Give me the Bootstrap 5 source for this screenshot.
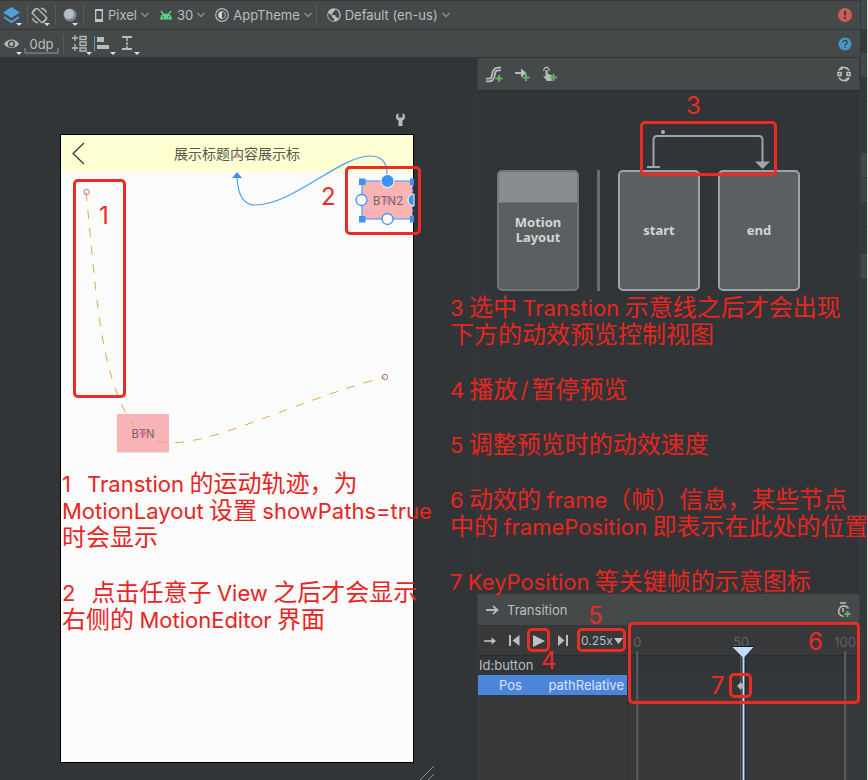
<!DOCTYPE html>
<html lang="zh-CN">
<head>
<meta charset="utf-8">
<meta name="viewport" content="width=device-width, initial-scale=1">
<title>Motion Editor</title>
<link href="https://cdn.jsdelivr.net/npm/bootstrap@5.3.0/dist/css/bootstrap.min.css" rel="stylesheet">
<style>
body{background:#313537;color:#bbbdbf;font:13px/16px Inter,"Noto Sans CJK SC",sans-serif}
svg{display:block;overflow:visible}
button,select{background:none;border:0;padding:0;color:inherit;font:inherit}
.bar{background:#45494a;border-bottom:1px solid #333637}
.bar-top{height:30px;border-top:1px solid #38393a}
.bar-second{height:28px}
.cell{width:27px;height:20px;position:relative;padding-left:3px}
.cell::after,.nub::after{content:"";position:absolute;right:5px;bottom:-1px;border:3px solid transparent;border-top-color:#ddd;border-bottom:0}
.drop{gap:4px;margin-left:10px}
.rule-v{width:1px;height:20px;background:#5d5856}
.nub{position:relative;width:24px;height:20px}
.nub::after{right:4px}
.nub-eye::after{right:2px}
.dp{width:35px;height:20px;line-height:14px;position:relative}
.edge{width:8px;border-right:1px solid #cfe0d8;border-left:1px solid #35383a;background:linear-gradient(#45494a 29px,#36383a 29px 53px,#45494a 53px 77px,#36393b 77px 101px,#303335 101px 102px,#36393b 102px 153px,#46494b 153px 177px,#36393b 177px 178px,#414446 178px 202px,#36393b 202px 226px,#303335 226px 227px,#36393b 227px 254px,#46494b 254px 278px,#36393b 278px)}
.design{background:#313537}
.phone-wrap{padding:76px 0 16px 60px}
.phone{width:354px;height:629px;background:#fbfbfb;border:1px solid #000}
.phone-head{height:37px;background:#feffd3;color:#58594b;font-size:14px;line-height:37px}
.overlay{left:0;top:0;pointer-events:none}
.wrench{left:394px;top:54px}
.editor{width:383px;border-left:1px solid #383b3c;border-right:1px solid #3a3d3f}
.bar-tools{height:33px;border-bottom:1px solid #2b2e2f}
.graph{height:503px;background:#313537}
.set-row{padding:79px 0 0 19px;gap:18px}
.set-box{width:82px;height:121px;border:2px solid #a0a3a4;border-radius:5px;background:#5a6061;color:#d3d5d5;font:bold 13px/15px "Noto Sans","Open Sans",sans-serif}
.set-root{border-color:#737475}
.set-root-top{height:31px;background:#8a8d8f;border-bottom:1px solid #737475;border-radius:3px 3px 0 0}
.set-line{width:3px;background:#6b6c6d}
.bar-trans{height:32px}
.controls{height:30px;gap:12px;padding-left:6px;border-bottom:1px solid #292b2c}
.tl-left{width:150px;border-right:1px solid #2c2e2f;background:#38393a}
.tl-right{background:#38393a}
.row-id{height:19px;background:#313537;line-height:19px;padding-left:1px}
.row-pos{height:21px;background:#4b85dc;color:#dbe5f5;line-height:20px;border-bottom:1px solid #303a48;padding:0 3px 0 21px}
.tl-head{height:30px;border-bottom:1px solid #2b2d2e}
.tl-row{height:19px;background:#313537}
.tl-row2{height:21px;background:#343739}
.speed{width:42px;appearance:none;font-size:12px}
.mark-box{position:absolute;border:3px solid #ec2b24;border-radius:5px}
.mark-num{position:absolute;color:#ec2b24;font:24px/28px Inter,sans-serif}
.note{position:absolute;color:#e8251f;font:24px/27px "Noto Sans CJK SC",sans-serif;white-space:nowrap}
.note p{margin:0 0 28px}
.note i{font:22px/0 Inter,sans-serif}
.note .slash{padding:0 3px}
.note-a{left:62px;top:468px}
.note-b{left:-28px;top:234px}
.m1{left:73px;top:121px;width:53px;height:219px}.n1{left:99px;top:144px}
.m2{left:345px;top:108px;width:76px;height:69px}.n2{left:321px;top:125px}
.m3{left:162px;top:30px;width:137px;height:55px}.n3{left:208px;top:1px}
.m4{left:49px;top:34px;width:23px;height:24px}.n4{left:63px;top:53px}
.m5{left:99px;top:34px;width:49px;height:24px}.n5{left:110px;top:8px}
.m6{left:150px;top:28px;width:232px;height:82px}.n6{left:330px;top:34px}
.m7{left:251px;top:79px;width:23px;height:25px}.n7{left:233px;top:78px}
</style>
<script src="https://cdn.jsdelivr.net/npm/bootstrap@5.3.0/dist/js/bootstrap.bundle.min.js"></script>
</head>
<body>
<div class="d-flex min-vh-100 overflow-hidden">
<div class="d-flex flex-column flex-grow-1 position-relative">

<header class="bar bar-top d-flex align-items-center">
  <button class="cell" aria-label="Layers"><svg width="17" height="17" viewBox="0 0 17 17"><path d="M8.500 0 17 5.500 8.500 11 0 5.500z" fill="#4d9fd6"/><path d="M1 10 8.500 15 16 10" fill="none" stroke="#4d9fd6" stroke-width="2"/></svg></button>
  <span class="rule-v"></span>
  <button class="cell" aria-label="Orientation"><svg width="17" height="17" viewBox="0 0 17 17" fill="none" stroke="#b4b6b7" stroke-width="1.400"><rect x="5" y="1.500" width="7" height="14" rx="1" transform="rotate(-45 8.500 8.500)"/><path d="M1.200 7A7 7 0 0 1 5 1.500M15.800 10A7 7 0 0 1 12 15.500M10 1.200a7 7 0 0 1 5.500 4.500M7 15.800a7 7 0 0 1-5.500-4.500"/></svg></button>
  <span class="rule-v"></span>
  <button class="cell" aria-label="Night mode"><svg class="ms-1" width="16" height="17" viewBox="0 0 16 17"><circle cx="7" cy="8" r="6.500" fill="#7d8a94"/><circle cx="6" cy="7" r="5" fill="#b3bec8"/></svg></button>
  <span class="rule-v"></span>
  <button class="drop d-flex align-items-center"><svg width="10" height="13" viewBox="0 0 10 13"><path fill="#c2c4c5" fill-rule="evenodd" d="M1 0h8v13H1zM2.300 2v8h5.400V2z"/></svg><span>Pixel</span><svg width="8" height="6" viewBox="0 0 8 6"><path d="M.5 1 4 4.500 7.500 1" fill="none" stroke="#8b8e90" stroke-width="1.500"/></svg></button>
  <button class="drop d-flex align-items-center"><svg width="14" height="10" viewBox="0 0 14 10"><path d="M1 9.500a6 6 0 0 1 12 0z" fill="#5bd183"/><path d="M2 1 5 5M12 1 9 5" stroke="#5bd183" stroke-width="1.500"/><circle cx="4.300" cy="7" r=".8" fill="#45494a"/><circle cx="9.700" cy="7" r=".8" fill="#45494a"/></svg><span>30</span><svg width="8" height="6" viewBox="0 0 8 6"><path d="M.5 1 4 4.500 7.500 1" fill="none" stroke="#8b8e90" stroke-width="1.500"/></svg></button>
  <button class="drop d-flex align-items-center"><svg width="14" height="14" viewBox="0 0 14 14"><circle cx="7" cy="7" r="6.300" fill="none" stroke="#b6b8b9" stroke-width="1.200"/><circle cx="7" cy="7" r="3.500" fill="none" stroke="#b6b8b9"/><path d="M7 3.500a3.500 3.500 0 0 0 0 7z" fill="#d0d2d3"/></svg><span>AppTheme</span><svg width="8" height="6" viewBox="0 0 8 6"><path d="M.5 1 4 4.500 7.500 1" fill="none" stroke="#8b8e90" stroke-width="1.500"/></svg></button>
  <span class="rule-v ms-1"></span>
  <button class="drop d-flex align-items-center"><svg width="14" height="14" viewBox="0 0 14 14"><circle cx="7" cy="7" r="6.800" fill="#b9bbbc"/><path d="M1.500 5l3.500 3v1.500l2 1V13C3 13 0 9 1.500 5zM8 1.200v1.500L6 4v1.500L4.500 6v1H8l1 2.300h1.300l1 1.500C13.500 8 12.500 3 8 1.200z" fill="#45494a"/></svg><span>Default (en-us)</span><svg width="8" height="6" viewBox="0 0 8 6"><path d="M.5 1 4 4.500 7.500 1" fill="none" stroke="#8b8e90" stroke-width="1.500"/></svg></button>
  <button class="ms-auto me-2" aria-label="Errors"><svg width="14" height="14" viewBox="0 0 14 14"><circle cx="7" cy="7" r="7" fill="#cb5b5b"/><path d="M7 3v4.500M7 9v2" stroke="#343638" stroke-width="1.800"/></svg></button>
</header>

<div class="bar bar-second d-flex align-items-center">
  <button class="nub nub-eye" aria-label="View options"><svg class="ms-1" width="15" height="19" viewBox="0 0 15 19"><path d="M0 10C3 4 12 4 15 10 12 15.500 3 15.500 0 10z" fill="#b4b6b7"/><circle cx="7.500" cy="10" r="3.500" fill="#45494a"/><circle cx="7.500" cy="10" r="2" fill="#b4b6b7"/></svg></button>
  <button class="dp">0dp<svg class="position-absolute bottom-0 start-0" width="35" height="6" viewBox="0 0 35 6"><path d="M1 0v5h33V0" fill="none" stroke="#96999a"/></svg></button>
  <span class="rule-v ms-1"></span>
  <button class="nub ms-2" aria-label="Pack"><svg width="17" height="19" viewBox="0 0 17 19" fill="none" stroke="#b9bbbc" stroke-width="1.300"><path d="M0 4h6M3 1v6M0 14h6M3 10v7M8 2.500h6v3H8zM8 8h6v3.500H8zM8 14h6v3H8z"/></svg></button>
  <button class="nub" aria-label="Align"><svg width="17" height="19" viewBox="2 0 17 19"><path d="M.5 2v15" stroke="#4d9fd6"/><path d="M3 3h7v5H3zM3 11h12v4H3z" fill="#b9bbbc"/></svg></button>
  <button class="nub" aria-label="Guidelines"><svg width="17" height="19" viewBox="1 0 17 19" fill="none" stroke="#b9bbbc"><path d="M3 3h10M3 15h10" stroke-width="2"/><path d="M8 4v11" stroke-width="1.500" stroke-dasharray="3 1"/></svg></button>
  <button class="ms-auto me-2" aria-label="Help"><svg width="14" height="14" viewBox="0 0 14 14"><circle cx="7" cy="7" r="6.500" fill="#4897c6"/><path d="M4.800 5.500c0-3 4.500-2.500 4.400 0C9.200 7 7 7 7 8.700M7 9.700V11" fill="none" stroke="#2b4454" stroke-width="1.300"/></svg></button>
</div>

<div class="d-flex flex-grow-1">
<main class="design position-relative flex-grow-1">
  <div class="phone-wrap">
    <section class="phone">
      <div class="phone-head text-center">展示标题内容展示标</div>
    </section>
  </div>
  <svg class="overlay position-absolute" width="478" height="722" viewBox="0 58 478 722">
    <path d="M84 143 73 153.500 84 164" fill="none" stroke="#333" stroke-width="1.200"/>
    <rect x="117" y="415" width="52" height="38" fill="#bbb" opacity=".4"/><rect x="117" y="414" width="52" height="38" fill="#f7b3b5"/>
    <text x="143" y="438" text-anchor="middle" font-family="Roboto" font-size="12" fill="#80656a">BTN</text>
    <path d="M86 192C96 285 98 370 132 424C165 475 262 410 385 377" fill="none" stroke="#e6a94f" stroke-dasharray="9 9"/>
    <circle cx="86.500" cy="192" r="2.700" fill="none" stroke="#c5788f"/><circle cx="385" cy="377" r="2.700" fill="none" stroke="#b5738f"/>
    <path d="M143 429l3.500 4-3.500 4-3.500-4z" fill="#d873a2"/>
    <path d="M235 157l2-4 2 4M235 157h4" fill="none" stroke="#c5788f"/>
    <rect x="362" y="181" width="51" height="38" fill="#f7b3b5" stroke="#3b93f7"/>
    <text x="388" y="205" text-anchor="middle" font-family="Roboto" font-size="12" fill="#7a6468">BTN2</text>
    <path d="M386 198h4v4h-4z" fill="none" stroke="#d873a2"/>
    <path d="M413.500 182v38" stroke="#26394a" stroke-dasharray="3 2" stroke-width="2"/>
    <path d="M237 178C238 194 243 205 255 205C293 205 340 156 370 156C382 156 387 163 387 174" fill="none" stroke="#4b9df5" stroke-width="1.200"/>
    <path d="M232 178l5-6 5 6z" fill="#3b93f7"/>
    <path d="M359 178.500h6.500v6.500H359zM359 216h6.500v6.500H359zM410 178.500h4v6.500h-4zM410 216h4v6.500h-4z" fill="#3b93f7"/>
    <path d="M414 194a6 6 0 0 0 0 12z" fill="#3b93f7" stroke="#fff" stroke-width="1"/>
    <circle cx="387.500" cy="181" r="6.500" fill="#3b93f7" stroke="#fff"/>
    <g fill="#fff" stroke="#3b93f7" stroke-width="1.300"><circle cx="361.500" cy="200" r="5.500"/><circle cx="387.500" cy="219" r="5.500"/></g>
    <path d="M420 780l14-14M428 780l6-6" stroke="#8c8e8f"/>
  </svg>
  <svg class="wrench position-absolute" width="13" height="15" viewBox="0 0 13 15"><path d="M4.500 1C1 2.500 1 7 4.500 8.500V14h4V8.500C12 7 12 2.500 8.500 1v4.500h-4z" fill="#b6b8b9"/></svg>
  <div class="mark-box m1"></div><div class="mark-num n1">1</div>
  <div class="mark-box m2"></div><div class="mark-num n2">2</div>
</main>

<aside class="editor position-relative d-flex flex-column">
  <div class="bar bar-tools d-flex align-items-center px-2">
    <button aria-label="Create set"><svg width="17" height="17" viewBox="0 0 17 17" fill="none"><path d="M0 14h3c7 0 2-11 9-11h3" stroke="#b9bbbc" stroke-width="4.500"/><path d="M0 14h3c7 0 2-11 9-11h3" stroke="#45494a"/><path d="M13 9v7M9.500 12.500h7" stroke="#5fb565" stroke-width="2"/></svg></button>
    <button class="ms-2" aria-label="Create transition"><svg class="ms-1" width="16" height="17" viewBox="0 0 16 17" fill="none"><path d="M0 7h9" stroke="#b9bbbc" stroke-width="2"/><path d="M6 2.500 11.500 7 6 11.500z" fill="#b9bbbc"/><path d="M11 8v7M7.500 11.500h7" stroke="#5fb565" stroke-width="2"/></svg></button>
    <button class="ms-2" aria-label="Create click handler"><svg class="ms-1" width="17" height="17" viewBox="0 0 17 17"><path d="M1 5a2.700 2.700 0 1 1 5 0" fill="none" stroke="#b9bbbc" stroke-width="1.200"/><path d="M2.500 4h2.200v4l4 1v6H4L0 10l2.500.5z" fill="#b9bbbc"/><path d="M10.500 8v7M7 11.500h7" stroke="#5fb565" stroke-width="2"/></svg></button>
    <button class="ms-auto" aria-label="Cycle layouts"><svg width="14" height="16" viewBox="0 0 14 16" fill="none" stroke="#c0c2c3" stroke-width="1.500"><path d="M2 4.500C3 1 10 0 12 4.500M12 11.500C11 15 4 16 2 11.500M4.500.5v3.500M9.500 15.500V12"/><path d="M1 6.500h3v3H1zM10 6.500h3v3h-3z"/></svg></button>
  </div>
  <section class="graph position-relative">
    <div class="set-row d-flex">
      <div class="set-box set-root text-center"><div class="set-root-top"></div><div class="pt-2 mt-1">Motion<br>Layout</div></div>
      <div class="set-line"></div>
      <div class="set-box d-flex align-items-center justify-content-center">start</div>
      <div class="set-box d-flex align-items-center justify-content-center">end</div>
    </div>
    <svg class="overlay position-absolute" width="380" height="200" viewBox="478 91 380 200"><circle cx="663" cy="132" r="2" fill="#b0b2b3"/><path d="M653.500 167v-27q0-4 4-4h101q4 0 4 4v23" fill="none" stroke="#a2a4a5" stroke-width="2"/><path d="M647 167h13" stroke="#a2a4a5" stroke-width="2"/><path d="M755 161.500h15l-7.500 7.500z" fill="#a2a4a5"/></svg>
    <div class="mark-box m3"></div><div class="mark-num n3">3</div>
  </section>

  <section class="position-relative flex-grow-1 d-flex flex-column">
    <div class="bar bar-trans d-flex align-items-center px-2">
      <svg width="13" height="10" viewBox="0 0 13 10"><path d="M0 5h10M7 1l4.500 4L7 9" fill="none" stroke="#aebac4" stroke-width="1.800"/></svg><span class="ms-2">Transition</span>
      <button class="ms-auto" aria-label="Add key frame"><svg width="15" height="16" viewBox="0 0 15 16" fill="none"><path d="M4 1h6M12.500 6.500A5.300 5.300 0 1 0 7.500 14.500M7 6v4" stroke="#b9bbbc" stroke-width="1.600"/><path d="M11.500 9v6M8.500 12h6" stroke="#5fb565" stroke-width="2"/></svg></button>
    </div>
    <div class="d-flex flex-grow-1">
      <div class="tl-left">
        <div class="controls d-flex align-items-center">
          <button aria-label="Play mode"><svg width="13" height="10" viewBox="0 0 13 10"><path d="M0 5h9" stroke="#c0c2c3" stroke-width="1.600"/><path d="M7.500 1.500 12 5 7.500 8.500z" fill="#c0c2c3"/></svg></button>
          <button aria-label="Go to start"><svg width="12" height="11" viewBox="0 0 12 11"><path d="M0 0h2v11H0zM10.500 0v11L3.500 5.500z" fill="#bbbdbf"/></svg></button>
          <button aria-label="Play"><svg width="12" height="12" viewBox="0 0 12 12"><path d="M0 0v12L12 6z" fill="#c0c2c3"/></svg></button>
          <button aria-label="Go to end"><svg width="12" height="11" viewBox="0 0 12 11"><path d="M1 0v11l6.500-5.500zM9 0h2v11H9z" fill="#bbbdbf"/></svg></button>
          <div class="position-relative"><select class="speed" aria-label="Speed"><option>0.25x</option></select><svg class="position-absolute end-0 top-50 translate-middle-y" width="9" height="6" viewBox="0 0 9 6"><path d="M0 0h9L4.500 6z" fill="#c0c2c3"/></svg></div>
        </div>
        <div class="row-id">Id:button</div>
        <div class="row-pos d-flex justify-content-between"><span>Pos</span><span>pathRelative</span></div>
      </div>
      <div class="tl-right flex-grow-1 position-relative">
        <div class="tl-head"></div><div class="tl-row"></div><div class="tl-row2"></div>
        <svg class="overlay position-absolute" width="100%" height="100%">
          <g font-size="13" fill="#606263" text-anchor="middle"><text x="4%" y="21">0</text><text x="49%" y="21">50</text><text x="94%" y="21">100</text></g>
          <g stroke="#5b5d5e" stroke-width="2"><line x1="4%" x2="4%" y1="25" y2="100%"/><line x1="49%" x2="49%" y1="25" y2="100%"/><line x1="94%" x2="94%" y1="25" y2="100%"/></g>
          <line x1="50%" x2="50%" y1="30" y2="100%" stroke="#17191a" stroke-width="4"/><line x1="50%" x2="50%" y1="30" y2="100%" stroke="#c3dcff" stroke-width="2"/>
          <svg x="50%" y="0"><path d="M-11 21h21L0 32z" fill="#c3dcff"/><path d="M-11 20.500h21" stroke="#17191a"/><path d="M-6.500 60l4-4v8zM-3 56l3.500 4-3.500 4z" fill="#b4b6b7"/></svg>
        </svg>
      </div>
    </div>
    <div class="mark-box m4"></div><div class="mark-num n4">4</div>
    <div class="mark-box m5"></div><div class="mark-num n5">5</div>
    <div class="mark-box m6"></div><div class="mark-num n6">6</div>
    <div class="mark-box m7"></div><div class="mark-num n7">7</div>
  </section>
  <div class="note note-b">
    <p><i>3</i> 选中 <i>Transtion</i> 示意线之后才会出现<br>下方的动效预览控制视图</p>
    <p><i>4</i> 播放<i class="slash">/</i>暂停预览</p>
    <p><i>5</i> 调整预览时的动效速度</p>
    <p><i>6</i> 动效的 <i>frame</i>（帧）信息，某些节点<br>中的 <i>framePosition</i> 即表示在此处的位置</p>
    <p class="mb-0"><i>7</i> <i>KeyPosition</i> 等关键帧的示意图标</p>
  </div>
</aside>
</div>
<div class="note note-a">
  <p><i>1</i> &nbsp; <i>Transtion</i> 的运动轨迹，为<br><i>MotionLayout</i> 设置 <i>showPaths=true</i><br>时会显示</p>
  <p class="mb-0"><i>2</i> &nbsp; 点击任意子 <i>View</i> 之后才会显示<br>右侧的 <i>MotionEditor</i> 界面</p>
</div>
</div>
<div class="edge flex-shrink-0"></div>
</div>
</body>
</html>
